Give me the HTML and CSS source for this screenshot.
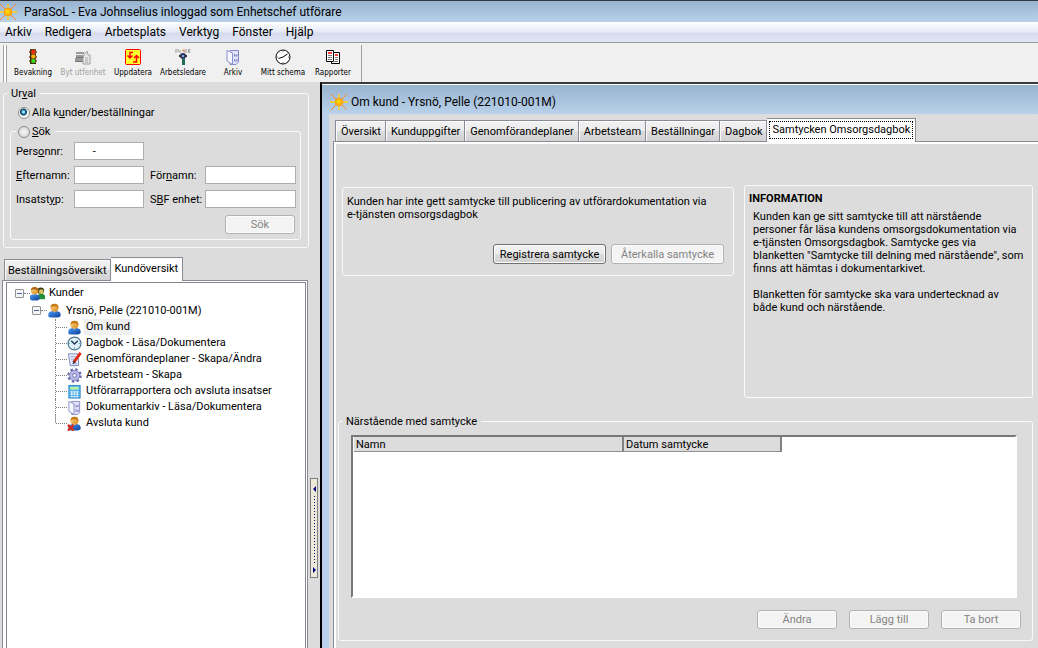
FILE: index.html
```html
<!DOCTYPE html>
<html lang="sv">
<head>
<meta charset="utf-8">
<title>ParaSoL</title>
<link rel="stylesheet" href="styles.css">
</head>
<body>
<svg class="defs" width="0" height="0" aria-hidden="true">
  <defs>
    <linearGradient id="skin" x1="0" y1="0" x2="1" y2="1"><stop offset="0" stop-color="#ffd58a"/><stop offset="1" stop-color="#d98a1c"/></linearGradient>
    <linearGradient id="coat" x1="0" y1="0" x2="1" y2="1"><stop offset="0" stop-color="#4a9af0"/><stop offset="1" stop-color="#0c3f9c"/></linearGradient>
    <symbol id="sun" viewBox="0 0 18 18">
      <path d="M1 1L17 17M17 1L1 17" stroke="#ff8a2a" stroke-width="1"/>
      <path d="M9 1V17M0 9H18" stroke="#ffd21a" stroke-width="1.4"/>
      <circle cx="9" cy="9" r="3.8" fill="#ffb400" stroke="#ff9a10"/>
      <circle cx="8.4" cy="8.4" r="2" fill="#ffd500"/>
    </symbol>
    <symbol id="person" viewBox="0 0 16 16">
      <path d="M1.500 15V12Q1.500 9 6 8.500H10Q14.500 9 14.500 12V14L12 15.500H4Z" fill="url(#coat)"/>
      <path d="M7 8.500L8 10.500L9 8.500Z" fill="#e8f2ff"/>
      <circle cx="8" cy="5" r="4.200" fill="url(#skin)"/>
      <path d="M3.800 5Q3.500 .8 8 .8Q12.500 .8 12.200 6Q11 3.500 8.500 3.500Q5 3.500 3.800 5Z" fill="#c67a12"/>
    </symbol>
    <symbol id="cabinet" viewBox="0 0 16 16">
      <path d="M5 1.500H13.500V13L11 15.500H5Z" fill="#e2e5fb" stroke="#8488c4"/>
      <path d="M2 1.500L7.500 4V15.500L2 12Z" fill="#f6f7ff" stroke="#8b90cc"/>
      <path d="M9.500 5V7H12V5M9.500 10V12H12V10" fill="none" stroke="#7a7fc0"/>
    </symbol>
  </defs>
</svg>

<header class="titlebar">
  <svg class="sun sun-main"><use href="#sun"/></svg>
  <h1>ParaSoL - Eva Johnselius inloggad som Enhetschef utförare</h1>
</header>

<nav class="menubar">
  <button>Arkiv</button><button>Redigera</button><button>Arbetsplats</button><button>Verktyg</button><button>Fönster</button><button>Hjälp</button>
</nav>

<div class="toolbar">
  <div class="tools">
    <button><svg viewBox="0 0 16 16"><path d="M4 3H12M4 8H12M4 12H12" stroke="#8a4a10" stroke-width="1.500"/><rect x="5" y="0" width="6" height="15" fill="#6b4a20"/><circle cx="8.300" cy="3" r="2" fill="#ff2a10"/><circle cx="8.300" cy="7.500" r="2" fill="#ffb300"/><circle cx="8.300" cy="12" r="2" fill="#2ee020"/><path d="M5.500 0V14.500H11" fill="none" stroke="#3a3010"/></svg><span>Bevakning</span></button>
    <button disabled><svg viewBox="0 0 16 16"><path d="M1 3H9V5H1ZM1 6H10V8H1ZM0 9H10V12H0Z" fill="#999"/><path d="M0 12.500H10M1 8.500H9" stroke="#777"/><path d="M9 6L12 2L13 6H15V15H8V9Z" fill="#e8e8e8" stroke="#a0a0a0"/><path d="M10 9H13M10 11H13M10 13H13" stroke="#aaa"/></svg><span>Byt utfenhet</span></button>
    <button><svg viewBox="0 0 16 16"><rect x=".5" y=".5" width="15" height="15" rx="1" fill="#ffff30" stroke="#f00"/><path d="M8 3.500H5V9M2.500 6.500L5 9L7.500 6.500M8 13H11.500V7M9 9L11.500 6.500L14 9" fill="none" stroke="#f00" stroke-width="1.500"/></svg><span>Uppdatera</span></button>
    <button><svg viewBox="0 0 16 16"><path d="M1 0V4M3 0V3M5 1V4M11 0V4M13 0L15 4M15 0L13 4" stroke="#999"/><path d="M7 1L10 3M9 0V3" stroke="#d09050"/><circle cx="8" cy="7" r="3" fill="#1f2a60"/><path d="M4 6H12V8H4Z" fill="#333"/><circle cx="8" cy="7" r="1.300" fill="#8fa0e8"/><rect x="7" y="9" width="3" height="7" fill="#286858"/></svg><span>Arbetsledare</span></button>
    <button><svg viewBox="0 0 16 16"><use href="#cabinet"/></svg><span>Arkiv</span></button>
    <button><svg viewBox="0 0 16 16"><circle cx="8" cy="8" r="7" fill="#fff" stroke="#000"/><path d="M3.500 9.500L8 8L12.500 5" fill="none" stroke="#000"/><path d="M8 1.500V3M8 13V14.500M1.500 8H3M13 8H14.500" stroke="#777"/></svg><span>Mitt schema</span></button>
    <button><svg viewBox="0 0 16 16"><path d="M1.500 1.500H8.500V12.500H1.500Z" fill="#fff" stroke="#000"/><path d="M8.500 3.500H14.500V14.500H6.500V12.500H8.500Z" fill="#fff" stroke="#000"/><path d="M3 4H7M10 6H13" stroke="#f00" stroke-width="1.400"/><path d="M3 6.500H7M3 8.500H7M3 10.500H7M10 8.500H13M10 10.500H13M8 12.500H13" stroke="#777"/></svg><span>Rapporter</span></button>
  </div>
</div>

<div class="workspace">
  <aside class="sidebar">
    <fieldset class="group selection">
      <legend>Ur<u>v</u>al</legend>
      <label class="radio"><input type="radio" name="urval" checked><span>Alla k<u>u</u>nder/beställningar</span></label>
      <fieldset class="group search">
        <legend><label class="radio"><input type="radio" name="urval"><span><u>S</u>ök</span></label></legend>
        <div class="fields">
          <label for="pnr">Pers<u>o</u>nnr:</label><input id="pnr" type="text" value="     -"><span></span><span></span>
          <label for="enamn"><u>E</u>fternamn:</label><input id="enamn" type="text">
          <label class="second" for="fnamn">För<u>n</u>amn:</label><input id="fnamn" type="text">
          <label for="typ">Insatst<u>y</u>p:</label><input id="typ" type="text">
          <label class="second" for="sbf">S<u>B</u>F enhet:</label><input id="sbf" type="text">
        </div>
        <div class="search-actions"><button class="btn" disabled>Sök</button></div>
      </fieldset>
    </fieldset>

    <div class="tabs side-tabs" role="tablist">
      <button class="tab" role="tab">Beställningsöversikt</button>
      <button class="tab active" role="tab" aria-selected="true">Kundöversikt</button>
    </div>
    <div class="tree-panel">
      <ul class="tree">
        <li>
          <div class="node root"><button class="toggle" aria-label="Fäll ihop Kunder"></button><i class="dots"></i>
            <svg viewBox="0 0 16 16"><circle cx="11.500" cy="5" r="3.500" fill="#333c10"/><circle cx="12" cy="6" r="2.500" fill="#d8c060"/><path d="M8 14V10L10 8.500H14L16 10V14Z" fill="#20903a"/><circle cx="5" cy="5" r="4" fill="url(#skin)"/><path d="M1 5Q1 1 5 1Q9 1 9 6Q7 3.500 5 3.500Q2 3.500 1 5Z" fill="#a86510"/><path d="M0 14V11Q0 9 3 9H7Q10 9 10 11V14L8 15.500H2Z" fill="url(#coat)"/></svg>
            <span>Kunder</span></div>
          <ul>
            <li>
              <div class="node branch"><button class="toggle" aria-label="Fäll ihop Yrsnö, Pelle"></button><i class="dots"></i><svg><use href="#person"/></svg><span>Yrsnö, Pelle (221010-001M)</span></div>
              <ul class="leaves">
                <li class="node"><i class="dots"></i><svg><use href="#person"/></svg><span class="current">Om kund</span></li>
                <li class="node"><i class="dots"></i><svg viewBox="0 0 16 16"><circle cx="8" cy="8" r="6.900" fill="#dff2fa" stroke="#4c7590" stroke-width="1.300"/><path d="M4.500 5L8 8.500L11.500 5" fill="none" stroke="#203850" stroke-width="1.500"/><path d="M8 12V14M2 8H3.500M12.500 8H14" stroke="#6aa0c0"/></svg><span>Dagbok - Läsa/Dokumentera</span></li>
                <li class="node"><i class="dots"></i><svg viewBox="0 0 16 16"><path d="M1.500 2H11.500L12.500 14.500H3.500Z" fill="#eef2ff" stroke="#6e82c0"/><path d="M4 5H9M4 7.500H8M5 10H7M5 12.500H11" stroke="#8ea0d0"/><path d="M14.500 1L7.500 10.500" stroke="#e02818" stroke-width="3"/><path d="M7 9L6 13L9.500 11Z" fill="#403030"/></svg><span>Genomförandeplaner - Skapa/Ändra</span></li>
                <li class="node"><i class="dots"></i><svg viewBox="0 0 16 16"><circle cx="8" cy="8" r="6.500" fill="none" stroke="#6668a8" stroke-width="2.400" stroke-dasharray="2.600 2.500"/><circle cx="8" cy="8" r="5.500" fill="#b6b8e6" stroke="#7072b4" stroke-width=".8"/><circle cx="8" cy="8" r="2" fill="#fff" stroke="#6668a8"/></svg><span>Arbetsteam - Skapa</span></li>
                <li class="node"><i class="dots"></i><svg viewBox="0 0 16 16"><rect x="2" y="1.500" width="12" height="13.500" fill="#58b4ee" stroke="#2c86c8"/><rect x="3.500" y="3" width="9" height="3" fill="#b6f0a0"/><path d="M4 8.500H12.500M4 11H12.500M4 13.500H12.500" stroke="#fff" stroke-width="1.500" stroke-dasharray="2 1"/></svg><span>Utförarrapportera och avsluta insatser</span></li>
                <li class="node"><i class="dots"></i><svg><use href="#cabinet"/></svg><span>Dokumentarkiv - Läsa/Dokumentera</span></li>
                <li class="node"><i class="dots"></i><svg viewBox="0 0 16 16"><use href="#person"/><path d="M1 9.500L7 15.500M7 9.500L1 15.500" stroke="#d82a18" stroke-width="2.400"/></svg><span>Avsluta kund</span></li>
              </ul>
            </li>
          </ul>
        </li>
      </ul>
    </div>
  </aside>

  <div class="splitter"><button aria-label="Ändra panelens bredd"><svg viewBox="0 0 6 96"><path d="M5 6V12L2 9ZM2 87V93L5 90Z" fill="#000080"/><path d="M3.500 16V84" stroke="#000080" stroke-dasharray="1 2"/></svg></button></div>

  <main class="window">
    <header class="window-title"><svg class="sun"><use href="#sun"/></svg><h2>Om kund - Yrsnö, Pelle (221010-001M)</h2></header>
    <div class="window-body">
      <div class="tabs" role="tablist">
        <button class="tab" role="tab">Översikt</button><button class="tab" role="tab">Kunduppgifter</button><button class="tab" role="tab">Genomförandeplaner</button><button class="tab" role="tab">Arbetsteam</button><button class="tab" role="tab">Beställningar</button><button class="tab" role="tab">Dagbok</button><button class="tab active focused" role="tab" aria-selected="true"><span>Samtycken Omsorgsdagbok</span></button>
      </div>
      <div class="tab-page">
        <div class="top-row">
          <section class="group consent">
            <p>Kunden har inte gett samtycke till publicering av utförardokumentation via<br>e-tjänsten omsorgsdagbok</p>
            <div class="actions"><button class="btn">Registrera samtycke</button><button class="btn" disabled>Återkalla samtycke</button></div>
          </section>
          <section class="group info">
            <h3>INFORMATION</h3>
            <p>Kunden kan ge sitt samtycke till att närstående<br>personer får läsa kundens omsorgsdokumentation via<br>e-tjänsten Omsorgsdagbok. Samtycke ges via<br>blanketten "Samtycke till delning med närstående", som<br>finns att hämtas i dokumentarkivet.</p>
            <p>Blanketten för samtycke ska vara undertecknad av<br>både kund och närstående.</p>
          </section>
        </div>
        <fieldset class="group relatives">
          <legend>Närstående med samtycke</legend>
          <div class="grid-box">
            <table><thead><tr><th class="col-name">Namn</th><th class="col-date">Datum samtycke</th></tr></thead></table>
          </div>
          <div class="row-actions"><button class="btn" disabled>Ändra</button><button class="btn" disabled>Lägg till</button><button class="btn" disabled>Ta bort</button></div>
        </fieldset>
      </div>
    </div>
  </main>
</div>
</body>
</html>
```

FILE: styles.css
```css
* { box-sizing: border-box; }

body {
  margin: 0;
  height: 100vh;
  overflow: hidden;
  display: flex;
  flex-direction: column;
  background: #dcdcdc;
  color: #000;
  font: 11px/13px Roboto, sans-serif;
}

button, input { font: inherit; color: inherit; }
button { margin: 0; padding: 0; border: 0; background: none; white-space: nowrap; }
h1, h2, h3, p, ul { margin: 0; padding: 0; font-size: inherit; font-weight: normal; }
.defs { position: absolute; }
svg { display: block; flex: none; }

/* Application frame */
.titlebar {
  display: flex;
  align-items: center;
  gap: 7px;
  height: 22px;
  flex: none;
  border-top: 1px solid #33373c;
  background: linear-gradient(#98b4d0, #b9d1ea);
}
.sun { width: 18px; height: 18px; }
.sun-main { margin-left: -1px; }
.titlebar h1, .window-title h2, .menubar { font-size: 12px; line-height: 16px; }

.menubar {
  display: flex;
  align-items: center;
  height: 20px;
  flex: none;
  background: linear-gradient(#fff, #e4e9f5 50%, #d5dbed 55%, #e0e6f6);
}
.menubar button { padding: 0 6px 0 7px; }
.menubar button:first-child { padding-left: 5px; }

.toolbar {
  flex: none;
  height: 40px;
  display: flex;
  padding: 2px 0 0 3px;
  border-top: 1px solid #9a9a9a;
  background: #f0f0f0;
}
.tools {
  display: flex;
  padding-left: 1px;
  border-left: 1px solid #a0a0a0;
  border-right: 1px solid #a0a0a0;
  box-shadow: inset 2px 0 #fff, inset 3px 0 #a0a0a0;
}
.tools button {
  width: 50px;
  display: flex;
  flex-direction: column;
  align-items: center;
  gap: 2px;
  padding-top: 4px;
  font: 8px/12px "DejaVu Sans Condensed", sans-serif;
}
.tools button:first-child { margin-left: 3px; }
.tools button:last-child { margin-right: 3px; }
.tools svg { width: 16px; height: 16px; }
.tools button:disabled { color: #a0a0a0; }

.workspace { flex: 1; min-height: 0; display: flex; }

/* Shared parts */
.group {
  min-width: 0;
  margin: 0;
  border: 1px solid #f6fafd;
  border-radius: 3px;
}
.btn {
  height: 19px;
  border: 1px solid #707070;
  border-radius: 3px;
  background: linear-gradient(#f2f2f2, #ebebeb 50%, #dddddd 50%, #cfcfcf);
  box-shadow: inset 0 0 0 1px #fcfcfc;
}
.btn:disabled { border-color: #adb2b5; background: #f4f4f4; color: #838383; }

.tabs { display: flex; align-items: flex-end; padding-left: 1px; }
.tab {
  height: 22px;
  padding: 0 3px;
  border: 1px solid #898c95;
  border-left-width: 0;
  background: linear-gradient(#f2f2f2, #ebebeb 50%, #dddddd 50%, #d2d2d2);
  box-shadow: inset 1px 1px #fcfcfc;
}
.tab:first-child { border-left-width: 1px; }
.tab.active {
  position: relative;
  z-index: 1;
  height: 24px;
  padding-bottom: 2px;
  border-bottom: 0;
  background: #fff;
}

/* Sidebar */
.sidebar { width: 309px; flex: none; display: flex; flex-direction: column; padding: 5px 0 0 3px; }
.selection { padding: 0 7px 7px 6px; }
.selection > legend { margin-left: -3px; padding: 0 4px; }
.radio { display: flex; align-items: center; gap: 2px; }
.selection > .radio { margin: 6px 0 6px 8px; }
.radio input {
  appearance: none;
  width: 12px;
  height: 12px;
  margin: 0;
  border: 1px solid #8e8f8f;
  border-radius: 50%;
  background: radial-gradient(#f8f8f8, #d0d0d0);
}
.radio input:checked { background: radial-gradient(circle at 45% 40%, #9fe4ff 0 1px, #1676a8 2px, #0b3c60 3px, #f4f4f4 4px); }
.search { padding: 4px 4px 5px 5px; }
.search legend { padding: 0 5px 0 2px; }
.fields {
  display: grid;
  grid-template-columns: 58px 70px 1fr 91px;
  align-items: center;
  row-gap: 6px;
}
.fields label { white-space: nowrap; }
.fields .second { padding-left: 6px; }
.fields input {
  width: 100%;
  min-width: 0;
  height: 18px;
  padding: 0 4px;
  border: 1px solid #abadb3;
  background: #fff;
}
.search-actions { display: flex; justify-content: flex-end; padding: 7px 1px 0 0; }
.search-actions .btn { width: 70px; }

.side-tabs { margin-top: 9px; }
.side-tabs .active { padding-left: 4px; padding-right: 4px; }
.tree-panel {
  flex: 1;
  margin: -1px 1px 0 -1px;
  padding: 1px 1px 0 3px;
  border: 1px solid #898c95;
  border-bottom: 0;
  background: #fff;
  display: flex;
}
.tree {
  flex: 1;
  padding: 1px 0 0 8px;
  border: 1px solid #828790;
  border-bottom: 0;
  list-style: none;
}
.tree ul { list-style: none; }
.node { display: flex; align-items: center; height: 16px; white-space: nowrap; }
.root { height: 18px; }
.branch { height: 17px; margin-left: 17px; }
.node svg { width: 15px; height: 15px; }
.node span { margin-left: 2px; padding: 0 2px; line-height: 16px; }
.node .current { background: #f0f0f0; }
.dots { width: 6px; border-top: 1px dotted #808080; }
.leaves { margin-left: 40px; }
.leaves .node { border-left: 1px dotted #808080; }
.leaves .node:last-child { border-image: linear-gradient(#a0a0a0 50%, transparent 50%) 1; }
.leaves .dots { width: 11px; }
.toggle {
  width: 9px;
  height: 9px;
  border: 1px solid #919191;
  border-radius: 1px;
  background: linear-gradient(#4b63a7, #4b63a7) center / 5px 1px no-repeat, #f6f6f6;
}

.splitter { width: 11px; flex: none; display: flex; align-items: flex-end; padding: 0 0 70px 1px; }
.splitter button { width: 8px; height: 100px; border: 1px solid #808080; background: #ece9d8; }
.splitter svg { width: 6px; height: 96px; }

/* Child window */
.window {
  flex: 1;
  min-width: 0;
  display: flex;
  flex-direction: column;
  padding-left: 7px;
  border-left: 2px solid #000;
  border-top: 2px solid #3a3a3a;
  background: #b9d1ea;
}
.window-title {
  display: flex;
  align-items: center;
  gap: 3px;
  height: 30px;
  flex: none;
  margin-left: -7px;
  padding: 4px 0 0 8px;
  border-top: 1px solid #fff;
  background: linear-gradient(#98b4d0, #b9d1ea);
}
.window-body {
  flex: 1;
  display: flex;
  flex-direction: column;
  padding: 4px 0 0 4px;
  background: #dcdcdc;
}
.window-body .tabs { padding-left: 2px; }
.window-body .tab { padding-left: 5px; padding-right: 4px; }
.window-body .tab.focused { padding: 2px 2px 4px; }
.focused span { display: block; padding: 1px 2px; border: 1px dotted #000; line-height: 14px; }
.tab-page {
  flex: 1;
  display: flex;
  flex-direction: column;
  margin-top: -1px;
  padding: 43px 5px 7px 4px;
  border-left: 1px solid #898c95;
  border-top: 1px solid #898c95;
  box-shadow: inset 2px 2px #fff;
}
.top-row { display: flex; align-items: flex-start; gap: 10px; padding-left: 4px; }
.consent {
  flex: 392;
  height: 89px;
  margin-top: 2px;
  padding: 7px 9px 11px 4px;
  display: flex;
  flex-direction: column;
  justify-content: space-between;
  white-space: nowrap;
}
.actions { display: flex; justify-content: flex-end; gap: 5px; }
.actions .btn { width: 113px; height: 20px; }
.info { flex: 290; height: 213px; padding: 6px 4px; white-space: nowrap; }
.info h3 { font-weight: bold; }
.info p { padding: 5px 0 0 4px; }
.info p + p { padding-top: 13px; }
.relatives {
  flex: 1;
  display: flex;
  flex-direction: column;
  margin-top: 17px;
  padding: 7px 11px 11px 12px;
}
.relatives legend { margin-left: -9px; padding: 0 4px; }
.grid-box {
  flex: 1;
  margin-right: 4px;
  border: 2px solid #fff;
  border-top-color: #787878;
  border-left-color: #787878;
  background: #fff;
}
.grid-box table { border-collapse: separate; border-spacing: 0; margin-left: 1px; table-layout: fixed; width: 428px; }
.grid-box th {
  height: 15px;
  padding: 0 1px 0 2px;
  border-right: 2px solid #808080;
  border-bottom: 1px solid #909090;
  background: #dcdcdc;
  font-weight: normal;
  text-align: left;
}
.col-name { width: 270px; }
.row-actions { display: flex; justify-content: flex-end; gap: 12px; padding-top: 12px; }
.row-actions .btn { width: 80px; }
```
